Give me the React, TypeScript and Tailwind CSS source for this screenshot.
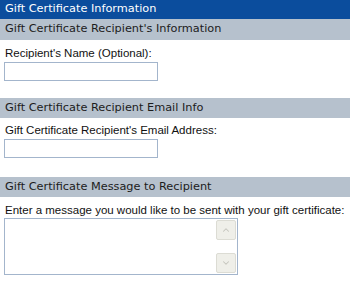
import { ChevronUp, ChevronDown } from 'lucide-react';

const headerFont = { fontFamily: '"DejaVu Sans", Verdana, sans-serif' };
const labelFont = { fontFamily: '"Liberation Sans", Arial, sans-serif' };

function SectionBar({ title, tall }: { title: string; tall?: boolean }) {
  return (
    <div
      className={`${tall ? 'h-[21px]' : 'h-[20px]'} bg-[#b6c1cd] text-[#1c1c1c] text-[11.3px] pl-[5px] flex items-center`}
      style={headerFont}
    >
      {title}
    </div>
  );
}

function Label({ children }: { children: string }) {
  return (
    <div className="text-[11.5px] leading-[15px] text-[#111] pl-[5px]" style={labelFont}>
      {children}
    </div>
  );
}

export default function App() {
  return (
    <div className="w-[350px] h-[283px] bg-white overflow-hidden">
      {/* Title */}
      <div
        className="h-[19px] bg-[#0b4d9d] text-white text-[11.3px] pl-[5px] flex items-center"
        style={headerFont}
      >
        Gift Certificate Information
      </div>

      {/* Recipient name */}
      <SectionBar title="Gift Certificate Recipient's Information" tall />
      <div className="pt-[6px] mb-[17px]">
        <Label>Recipient's Name (Optional):</Label>
        <input
          type="text"
          className="block mt-[1px] ml-[4px] w-[154px] h-[19px] border border-[#a3b5cc] bg-white outline-none"
        />
      </div>

      {/* Recipient email */}
      <SectionBar title="Gift Certificate Recipient Email Info" />
      <div className="pt-[5px] mb-[19px]">
        <Label>Gift Certificate Recipient's Email Address:</Label>
        <input
          type="text"
          className="block mt-[1px] ml-[4px] w-[154px] h-[19px] border border-[#a3b5cc] bg-white outline-none"
        />
      </div>

      {/* Message */}
      <SectionBar title="Gift Certificate Message to Recipient" />
      <div className="pt-[6px]">
        <Label>Enter a message you would like to be sent with your gift certificate:</Label>
        <div className="ml-[4px] w-[234px] h-[57px] border border-[#a3b5cc] bg-white flex">
          <div className="flex-1" />
          <div className="w-[21px] flex flex-col justify-between py-px pr-px">
            <div className="h-[20px] rounded-[2px] border border-[#dcdcd4] bg-[#efefe9] flex items-center justify-center">
              <ChevronUp className="w-[10px] h-[10px] text-[#c4c4bc]" strokeWidth={2.5} />
            </div>
            <div className="h-[20px] rounded-[2px] border border-[#dcdcd4] bg-[#efefe9] flex items-center justify-center">
              <ChevronDown className="w-[10px] h-[10px] text-[#c4c4bc]" strokeWidth={2.5} />
            </div>
          </div>
        </div>
      </div>
    </div>
  );
}
